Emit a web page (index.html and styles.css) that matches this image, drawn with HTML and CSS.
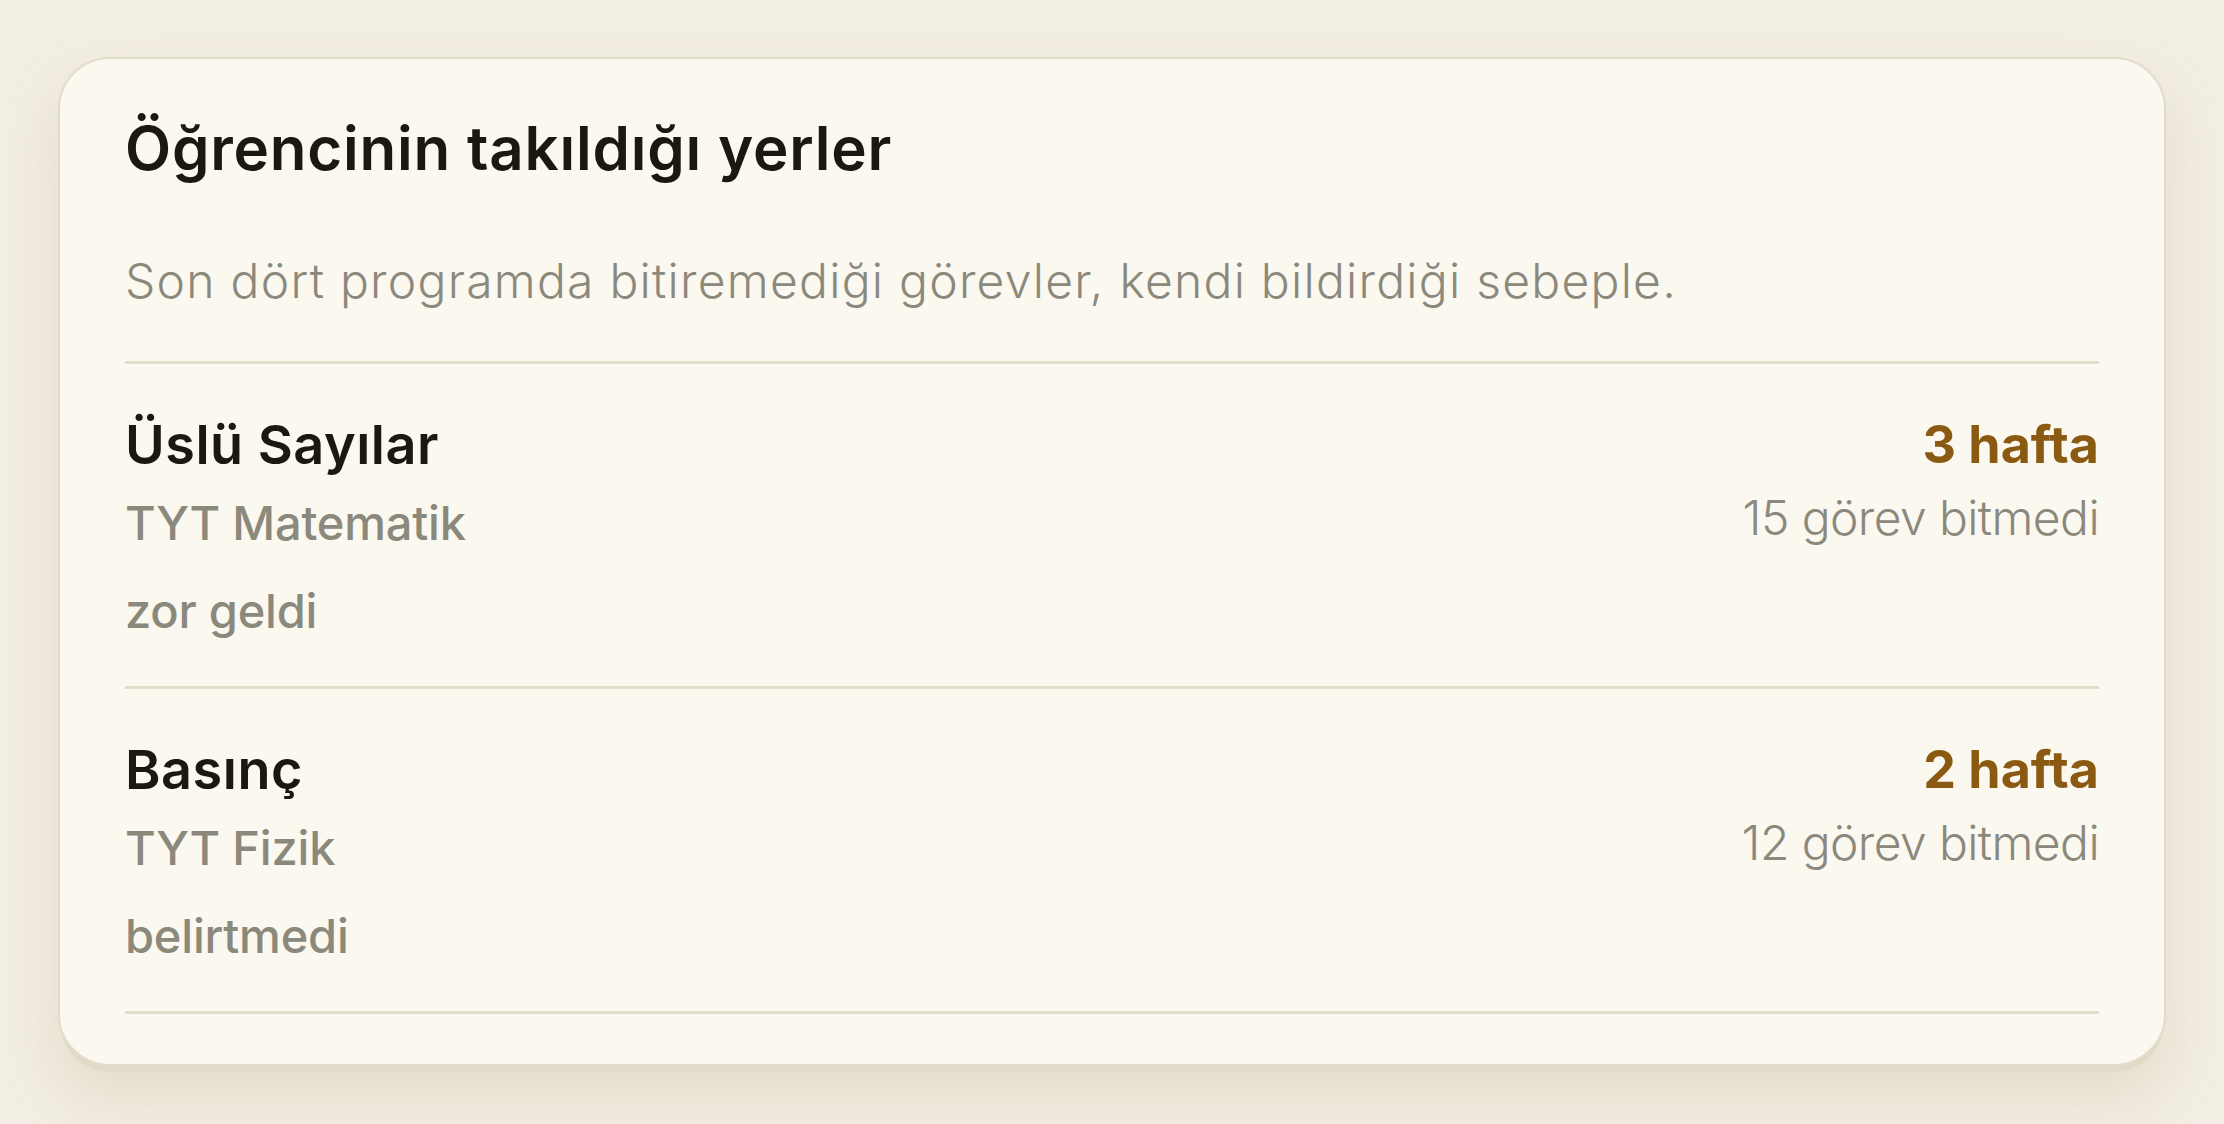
FILE: index.html
```html
<!DOCTYPE html>
<html lang="tr">
<head>
<meta charset="utf-8">
<title>Öğrencinin takıldığı yerler</title>
<link rel="stylesheet" href="styles.css">
</head>
<body>
<main class="page">
  <section class="card">
    <h1 class="card-title">Öğrencinin takıldığı yerler</h1>
    <p class="card-sub">Son dört programda bitiremediği görevler, kendi bildirdiği sebeple.</p>
    <ul class="list">
      <li class="item">
        <div class="item-main">
          <div class="item-name">Üslü Sayılar</div>
          <div class="item-course">TYT Matematik</div>
          <div class="item-reason">zor geldi</div>
        </div>
        <div class="item-side">
          <div class="item-weeks">3 hafta</div>
          <div class="item-count">15 görev bitmedi</div>
        </div>
      </li>
      <li class="item">
        <div class="item-main">
          <div class="item-name">Basınç</div>
          <div class="item-course">TYT Fizik</div>
          <div class="item-reason">belirtmedi</div>
        </div>
        <div class="item-side">
          <div class="item-weeks">2 hafta</div>
          <div class="item-count">12 görev bitmedi</div>
        </div>
      </li>
    </ul>
  </section>
</main>
</body>
</html>
```

FILE: styles.css
```css
* { box-sizing: border-box; }
html, body { margin: 0; padding: 0; }
body {
  background: #f3eee3;
  font-family: Inter, "Noto Sans", "Liberation Sans", sans-serif;
  color: #1b1810;
  width: 2224px;
  height: 1124px;
  overflow: hidden;
}
.page {
  padding: 57px 58px 0 58px;
}
.card {
  width: 2108px;
  background: #fbf8ef;
  border: 2px solid #e2dccb;
  border-radius: 52px;
  padding: 54px 65px 50px 65px;
  box-shadow: 0 8px 0 -2px #e0dac9, 0 30px 60px rgba(170, 155, 120, 0.22);
}
.card-title {
  margin: 0;
  font-size: 60px;
  line-height: 70px;
  font-weight: 600;
  letter-spacing: 0.8px;
  color: #1b1810;
}
.card-sub {
  margin: 70px 0 0 0;
  font-size: 48px;
  line-height: 56px;
  font-weight: 300;
  color: #8b887c;
  letter-spacing: 1.25px;
  padding-bottom: 52px;
  border-bottom: 3px solid #e2dccb;
}
.list {
  list-style: none;
  margin: 0;
  padding: 0;
}
.item {
  display: flex;
  justify-content: space-between;
  align-items: flex-start;
  padding: 50px 0 47px 0;
  border-bottom: 3px solid #e2dccb;
}
.item-main, .item-side {
  display: flex;
  flex-direction: column;
}
.item-side { align-items: flex-end; }
.item-name {
  font-size: 54px;
  line-height: 62px;
  font-weight: 600;
  letter-spacing: 0.5px;
  color: #1b1810;
}
.item-course {
  margin-top: 19px;
  font-size: 47px;
  line-height: 56px;
  font-weight: 500;
  letter-spacing: -0.2px;
  color: #8b887c;
}
.item-reason {
  margin-top: 32px;
  font-size: 47px;
  line-height: 56px;
  font-weight: 500;
  letter-spacing: -0.2px;
  color: #8b887c;
}
.item-weeks {
  font-size: 52px;
  line-height: 62px;
  font-weight: 700;
  letter-spacing: 0;
  color: #8a5a12;
}
.item-count {
  margin-top: 14px;
  font-size: 48px;
  line-height: 56px;
  font-weight: 300;
  letter-spacing: -0.6px;
  color: #8b887c;
}
```
